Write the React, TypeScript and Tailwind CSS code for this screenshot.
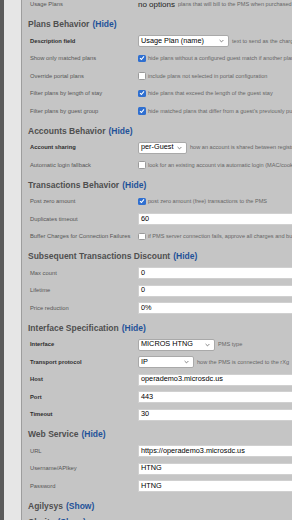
import React from "react";

const Chevron = () => (
  <svg width="5" height="4" viewBox="0 0 5 4" className="shrink-0">
    <path d="M0.6 1 L2.5 2.9 L4.4 1" fill="none" stroke="#666" strokeWidth="0.8" />
  </svg>
);

const Check = ({ on }: { on: boolean }) =>
  on ? (
    <div className="w-[7.5px] h-[7.5px] rounded-[1.5px] bg-[#2f6fd0] flex items-center justify-center shrink-0">
      <svg width="6" height="6" viewBox="0 0 6 6">
        <path d="M1 3.1 L2.4 4.5 L5 1.4" fill="none" stroke="#fff" strokeWidth="1.1" />
      </svg>
    </div>
  ) : (
    <div className="w-[7.5px] h-[7.5px] rounded-[1.5px] bg-white border border-[#9a9a9a] shrink-0" />
  );

const Row = ({ label, bold, children }: { label: string; bold?: boolean; children?: React.ReactNode }) => (
  <div className="flex items-center h-[17.5px] whitespace-nowrap">
    <div
      className={
        bold
          ? "w-[116px] pl-[8px] text-[5.8px] font-bold text-[#2e2e2e] shrink-0"
          : "w-[116px] pl-[8px] text-[5.8px] text-[#555] shrink-0"
      }
    >
      {label}
    </div>
    <div className="flex items-center">{children}</div>
  </div>
);

const Desc = ({ children, ml }: { children: React.ReactNode; ml?: boolean }) => (
  <span className={ml ? "ml-[3px] text-[5.6px] text-[#666]" : "ml-[2.5px] text-[5.6px] text-[#666]"}>{children}</span>
);

const Sel = ({ w, value }: { w: string; value: string }) => (
  <div
    className={`${w} h-[12px] bg-white rounded-[2px] border border-[#a9a9a9] flex items-center justify-between pl-[2px] pr-[4px] text-[7.3px] text-black shrink-0`}
  >
    <span>{value}</span>
    <Chevron />
  </div>
);

const Inp = ({ value }: { value: string }) => (
  <div className="w-[180px] h-[12px] bg-white border border-[#d0d0d0] rounded-[1px] flex items-center pl-[2px] text-[7.3px] text-black shrink-0">
    {value}
  </div>
);

const Head = ({ title, action, last }: { title: string; action: string; last?: boolean }) => (
  <div className={last ? "h-[16px] pl-[6px] flex items-center whitespace-nowrap text-[8.5px] font-bold text-[#4f4f4f]" : "h-[15.5px] pl-[6px] flex items-center whitespace-nowrap text-[8.5px] font-bold text-[#4f4f4f]"}>
    {title}
    <span className="ml-[3px] text-[#1f5299]">({action})</span>
  </div>
);

const Section = ({ children }: { children: React.ReactNode }) => <div className="mb-[3.5px]">{children}</div>;

export default function App() {
  return (
    <div
      className="w-[292px] h-[520px] overflow-hidden flex"
      style={{ fontFamily: '"Liberation Sans", Arial, sans-serif' }}
    >
      <div className="w-[4px] bg-[#5b5b5b] shrink-0" />
      <div className="w-[17px] bg-[#e6e6e6] shrink-0" />
      <div className="flex-1 bg-[#c5c5c5] border-l border-[#9d9d9d] min-w-0 overflow-hidden">
        <div className="-mt-[4.25px]">
          <Section>
            <Row label="Usage Plans">
              <span className="text-[8px] text-[#222]">no options</span>
              <Desc ml>plans that will bill to the PMS when purchased</Desc>
            </Row>
          </Section>

          <Head title="Plans Behavior" action="Hide" />
          <Section>
            <Row label="Description field" bold>
              <Sel w="w-[91px]" value="Usage Plan (name)" />
              <Desc ml>text to send as the charge description</Desc>
            </Row>
            <Row label="Show only matched plans">
              <Check on />
              <Desc>hide plans without a configured guest match if another plan matches</Desc>
            </Row>
            <Row label="Override portal plans">
              <Check on={false} />
              <Desc>include plans not selected in portal configuration</Desc>
            </Row>
            <Row label="Filter plans by length of stay">
              <Check on />
              <Desc>hide plans that exceed the length of the guest stay</Desc>
            </Row>
            <Row label="Filter plans by guest group">
              <Check on />
              <Desc>hide matched plans that differ from a guest's previously purchased plan</Desc>
            </Row>
          </Section>

          <Head title="Accounts Behavior" action="Hide" />
          <Section>
            <Row label="Account sharing" bold>
              <Sel w="w-[49px]" value="per-Guest" />
              <Desc ml>how an account is shared between registrations</Desc>
            </Row>
            <Row label="Automatic login fallback">
              <Check on={false} />
              <Desc>look for an existing account via automatic login (MAC/cookie)</Desc>
            </Row>
          </Section>

          <Head title="Transactions Behavior" action="Hide" />
          <Section>
            <Row label="Post zero amount">
              <Check on />
              <Desc>post zero amount (free) transactions to the PMS</Desc>
            </Row>
            <Row label="Duplicates timeout">
              <Inp value="60" />
            </Row>
            <Row label="Buffer Charges for Connection Failures">
              <Check on={false} />
              <Desc>if PMS server connection fails, approve all charges and buffer them</Desc>
            </Row>
          </Section>

          <Head title="Subsequent Transactions Discount" action="Hide" />
          <Section>
            <Row label="Max count">
              <Inp value="0" />
            </Row>
            <Row label="Lifetime">
              <Inp value="0" />
            </Row>
            <Row label="Price reduction">
              <Inp value="0%" />
            </Row>
          </Section>

          <Head title="Interface Specification" action="Hide" />
          <Section>
            <Row label="Interface" bold>
              <Sel w="w-[77px]" value="MICROS HTNG" />
              <Desc ml>PMS type</Desc>
            </Row>
            <Row label="Transport protocol" bold>
              <Sel w="w-[56px]" value="IP" />
              <Desc ml>how the PMS is connected to the rXg</Desc>
            </Row>
            <Row label="Host" bold>
              <Inp value="operademo3.microsdc.us" />
            </Row>
            <Row label="Port" bold>
              <Inp value="443" />
            </Row>
            <Row label="Timeout" bold>
              <Inp value="30" />
            </Row>
          </Section>

          <Head title="Web Service" action="Hide" />
          <Section>
            <Row label="URL">
              <Inp value="https://operademo3.microsdc.us" />
            </Row>
            <Row label="Username/APIkey">
              <Inp value="HTNG" />
            </Row>
            <Row label="Password">
              <Inp value="HTNG" />
            </Row>
          </Section>

          <Head title="Agilysys" action="Show" last />
          <Head title="Clarity" action="Show" last />
        </div>
      </div>
    </div>
  );
}
